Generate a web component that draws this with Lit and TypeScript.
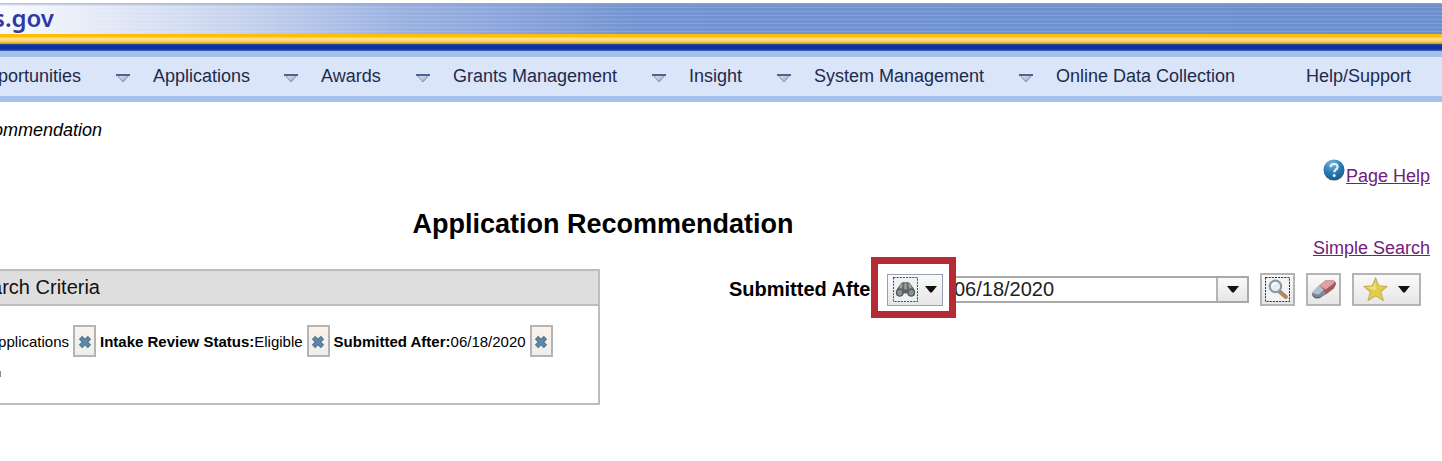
import { LitElement, html, css } from "lit";
import { customElement } from "lit/decorators.js";

const sans = css`"Liberation Sans", Arial, sans-serif`;

const menuItems = [
  { label: "portunities", arrow: true, width: 153 },
  { label: "Applications", arrow: true, width: 168 },
  { label: "Awards", arrow: true, width: 132 },
  { label: "Grants Management", arrow: true, width: 236 },
  { label: "Insight", arrow: true, width: 125 },
  { label: "System Management", arrow: true, width: 242 },
  { label: "Online Data Collection", arrow: false, width: 250 },
  { label: "Help/Support", arrow: false, width: 136 },
];

const menuArrow = html`<svg class="menu-arrow" viewBox="0 0 14 9" aria-hidden="true">
  <defs>
    <linearGradient id="tri" x1="0" y1="0" x2="1" y2="1">
      <stop offset="0" stop-color="#e4ecf6" /><stop offset="1" stop-color="#94a2b8" />
    </linearGradient>
  </defs>
  <path d="M1 1H13L7 8Z" fill="url(#tri)" stroke="#8090b0" />
  <path d="M0 1H14" stroke="#4c6394" stroke-width="2" />
</svg>`;

const caret = html`<svg class="caret" viewBox="0 0 12 7" aria-hidden="true"><path d="M0 0H12L6.8 6.4H5.2Z" fill="#111" /></svg>`;

const cross = html`<svg class="cross" viewBox="0 0 14 14" aria-hidden="true">
  <path d="M2.500 2.500L11.500 11.500M11.500 2.500L2.500 11.500" stroke="#55707f" stroke-width="4.600" />
  <path d="M3 3L11 11M11 3L3 11" stroke="#5889b3" stroke-width="2.600" />
</svg>`;

const binoculars = html`<svg class="icon" viewBox="0 0 24 24" aria-hidden="true">
  <rect x=".5" y=".5" width="23" height="23" fill="#edf2f5" stroke="#2d5878" stroke-dasharray="2 1" />
  <path d="M7 7Q9 4 12 5Q15 4 17 7L20 11Q22 14 21 17Q18 20 15 18L13 15H11L9 18Q6 20 3 17Q2 14 4 11Z" fill="#666b6c" />
  <path d="M8.500 7L7 11M15.500 7L17 11M12 6V12" stroke="#a5aaab" stroke-width="2" />
  <ellipse cx="6.500" cy="15" rx="3" ry="3.200" fill="#8a9294" stroke="#4c5355" />
  <ellipse cx="17.500" cy="15" rx="3" ry="3.200" fill="#8a9294" stroke="#4c5355" />
  <circle cx="12" cy="14" r="2" fill="#5c6263" />
</svg>`;

const magnifier = html`<svg class="icon" viewBox="0 0 24 24" aria-hidden="true">
  <rect x=".5" y=".5" width="23" height="23" fill="#f1f3f4" stroke="#333" stroke-dasharray="2 1" />
  <path d="M14 14L20 19" stroke="#b08a58" stroke-width="4" stroke-linecap="round" />
  <circle cx="10" cy="9" r="5.500" fill="#e4eff8" stroke="#8d99a5" stroke-width="2" />
  <path d="M7 8Q8 5.500 11 6" fill="none" stroke="#fff" stroke-width="1.600" />
</svg>`;

const eraser = html`<svg class="icon" viewBox="0 0 24 24" aria-hidden="true">
  <path d="M1 15L8 8L15 14L8 20Q6 21 4 20L1 18Z" fill="#77869a" />
  <path d="M1 15L8 8L14 11L7 17Z" fill="#b4bfcc" />
  <path d="M8 8L14 3H21Q24 4 24 7L22 11L14 17L12 12Z" fill="#a5575b" />
  <path d="M8 8L14 3H21Q23 4 22 6L14 12Z" fill="#dfa2a3" />
  <path d="M2 18L4 20H8L14 16" fill="none" stroke="#485768" />
</svg>`;

const star = html`<svg class="icon" viewBox="0 0 24 24" aria-hidden="true">
  <path d="M12 1L15.200 8.500L23 9L17 14.200L19.500 22.500L12 18L5 22.500L7 14.200L1 9L8.800 8.500Z" fill="#e3cd4c" stroke="#c4ad58" />
  <path d="M12 4V13L4 10L10 9.500Z" fill="#f1e385" />
</svg>`;

const help = html`<svg class="help-icon" viewBox="0 0 22 22" aria-hidden="true">
  <defs>
    <radialGradient id="ball" cx=".4" cy=".2" r=".8">
      <stop offset="0" stop-color="#79b9dd" /><stop offset=".5" stop-color="#2f80b6" /><stop offset="1" stop-color="#1b5a8c" />
    </radialGradient>
  </defs>
  <circle cx="11" cy="11" r="10.500" fill="url(#ball)" />
  <path d="M7.500 8Q8 5 11.300 5Q14.800 5.200 14.500 8.200Q14.200 9.800 12.500 10.800Q11.300 11.600 11.300 13.300" fill="none" stroke="#e4f3fb" stroke-width="2.200" />
  <circle cx="11.200" cy="16.500" r="1.500" fill="#e4f3fb" />
</svg>`;

@customElement("site-header")
class SiteHeader extends LitElement {
  static styles = css`
    :host { display: block; font-family: ${sans}; padding-top: 3px; }
    .banner {
      height: 31px;
      background:
        linear-gradient(#8e9fc088 0 1px, #ffffff00 3px),
        repeating-linear-gradient(180deg, #ffffff22 0 1px, #ffffff00 1px 4px),
        linear-gradient(90deg, #f8faff 0, #e6ebf7 90px, #c5d1ec 250px, #9bb1df 400px, #8ca5da 510px, #7394d0 640px, #6d8fce 100%);
    }
    .brand {
      display: flex;
      justify-content: flex-end;
      width: 54px;
      overflow: hidden;
      font: 600 24px/30px "Noto Sans", sans-serif;
      color: #3038a4;
    }
    .gold { height: 10px; background: linear-gradient(#ffbd08 0 3px, #ffe08a 4px 6px, #ffc738 8px, #b8903a); }
    .navy { height: 7px; background: linear-gradient(#39508c, #0832a6 2px 5px, #4c6cb4); }
    .menu {
      display: flex;
      border: solid #a5c0ea;
      border-width: 6px 0;
      background: #dae5fa;
      line-height: 39px;
    }
    .entry { display: flex; align-items: center; justify-content: space-between; flex-shrink: 0; }
    .entry a { font-size: 18px; color: #1e2b4a; text-decoration: none; white-space: nowrap; }
    .entry:first-child a { display: flex; justify-content: flex-end; width: 81px; overflow: hidden; }
    .menu-arrow { width: 14px; height: 9px; margin: 4px 23px 0 0; }
  `;
  render() {
    return html`
      <div class="banner"><div class="brand">s.gov</div></div>
      <div class="gold"></div>
      <div class="navy"></div>
      <nav class="menu">
        ${menuItems.map(
          (m) => html`<div class="entry" style="width:${m.width}px"><a href="#">${m.label}</a>${m.arrow ? menuArrow : ""}</div>`
        )}
      </nav>
    `;
  }
}

@customElement("search-criteria")
class SearchCriteria extends LitElement {
  static styles = css`
    :host { display: block; font-family: ${sans}; color: #000; }
    .panel { border: 2px solid #bdbdbd; border-left: 0; }
    .title { margin: 0; font-size: 20px; font-weight: 400; line-height: 33px; background: #dedede; border-bottom: 2px solid #bdbdbd; color: #111; white-space: nowrap; }
    .title span, .kind { display: flex; justify-content: flex-end; overflow: hidden; }
    .title span { width: 100px; }
    .kind { width: 69px; }
    .body { min-height: 97px; box-sizing: border-box; padding-top: 19px; }
    .list { display: flex; align-items: center; gap: 4px; font-size: 15px; white-space: nowrap; }
    .remove {
      display: grid; place-items: center; box-sizing: border-box; width: 23px; height: 32px; padding: 0;
      border: 2px solid #b4b4b4; background: linear-gradient(#fbf2ea, #eceef0);
    }
    .cross { width: 14px; height: 14px; margin-top: 2px; }
    .next { width: 1px; height: 6px; margin-top: 14px; background: #7f93a6; }
  `;
  render() {
    const remove = (label: string) => html`<button class="remove" aria-label="Remove ${label}">${cross}</button>`;
    return html`<section class="panel">
      <h2 class="title"><span>arch Criteria</span></h2>
      <div class="body">
        <div class="list">
          <span class="kind">pplications</span>${remove("applications")}
          <span><b>Intake Review Status:</b>Eligible</span>${remove("status")}
          <span><b>Submitted After:</b>06/18/2020</span>${remove("date")}
        </div>
        <div class="next"></div>
      </div>
    </section>`;
  }
}

@customElement("search-bar")
class SearchBar extends LitElement {
  static styles = css`
    :host { display: flex; align-items: center; font-family: ${sans}; font-size: 20px; }
    .label { font-weight: 700; white-space: nowrap; width: 158px; }
    .marked { position: relative; }
    .frame { position: absolute; inset: -17px -13px -12px -16px; border: 7px solid #b52a33; background: #fff; }
    button {
      display: flex; align-items: center; justify-content: center; box-sizing: border-box;
      height: 33px; padding: 0; border: 2px solid #b4b4b4;
      background: linear-gradient(#fafafa, #e6e6e6); color: #111;
    }
    .find { position: relative; width: 56px; height: 32px; gap: 7px; border: 1px solid #98a0b4; }
    .combo { display: flex; flex: 1; min-width: 0; height: 27px; box-sizing: border-box; border: 2px solid #a9a9a9; }
    .combo input { flex: 1; min-width: 0; padding: 0 0 0 9px; border: 0; outline: 0; font: inherit; color: #222; background: #fff; }
    .combo button { width: 31px; height: 23px; border-width: 0 0 0 2px; }
    .tool { width: 35px; margin-left: 11px; }
    .star { width: 69px; margin-left: 11px; gap: 10px; }
    .icon { width: 25px; height: 25px; }
    .caret { width: 12px; height: 7px; }
  `;
  render() {
    return html`
      <label class="label" for="date">Submitted After</label>
      <div class="marked">
        <div class="frame"></div>
        <button class="find" aria-label="Search column">${binoculars}${caret}</button>
      </div>
      <div class="combo">
        <input id="date" value="06/18/2020" />
        <button aria-label="Show values">${caret}</button>
      </div>
      <button class="tool" aria-label="Search">${magnifier}</button>
      <button class="tool" aria-label="Clear">${eraser}</button>
      <button class="star" aria-label="Saved searches">${star}${caret}</button>
    `;
  }
}

@customElement("app-root")
class AppRoot extends LitElement {
  static styles = css`
    :host { display: block; overflow: hidden; background: #fff; font-family: ${sans}; color: #000; }
    .crumb { width: 102px; display: flex; justify-content: flex-end; overflow: hidden; padding-top: 17px; font-size: 18px; line-height: 22px; font-style: italic; }
    .links { display: flex; justify-content: flex-end; padding: 18px 12px 0 0; }
    .link { color: #71207d; font-size: 18px; line-height: 22px; white-space: nowrap; }
    .page-help { display: flex; align-items: flex-end; gap: 1px; }
    .help-icon { width: 22px; height: 22px; margin-bottom: 6px; }
    .heading { margin: 22px 0 0; width: 1206px; text-align: center; font-size: 27px; line-height: 30px; }
    .simple { display: flex; justify-content: flex-end; margin-top: -2px; padding-right: 12px; }
    .row { display: flex; align-items: flex-start; padding-right: 21px; }
    .criteria { width: 600px; margin: 10px 129px 0 0; flex-shrink: 0; }
    .search { flex: 1; min-width: 0; padding-top: 14px; }
  `;
  render() {
    return html`
      <site-header></site-header>
      <main>
        <div class="crumb">ommendation</div>
        <div class="links"><div class="page-help">${help}<a class="link" href="#">Page Help</a></div></div>
        <h1 class="heading">Application Recommendation</h1>
        <div class="simple"><a class="link" href="#">Simple Search</a></div>
        <div class="row">
          <search-criteria class="criteria"></search-criteria>
          <search-bar class="search"></search-bar>
        </div>
      </main>
    `;
  }
}
